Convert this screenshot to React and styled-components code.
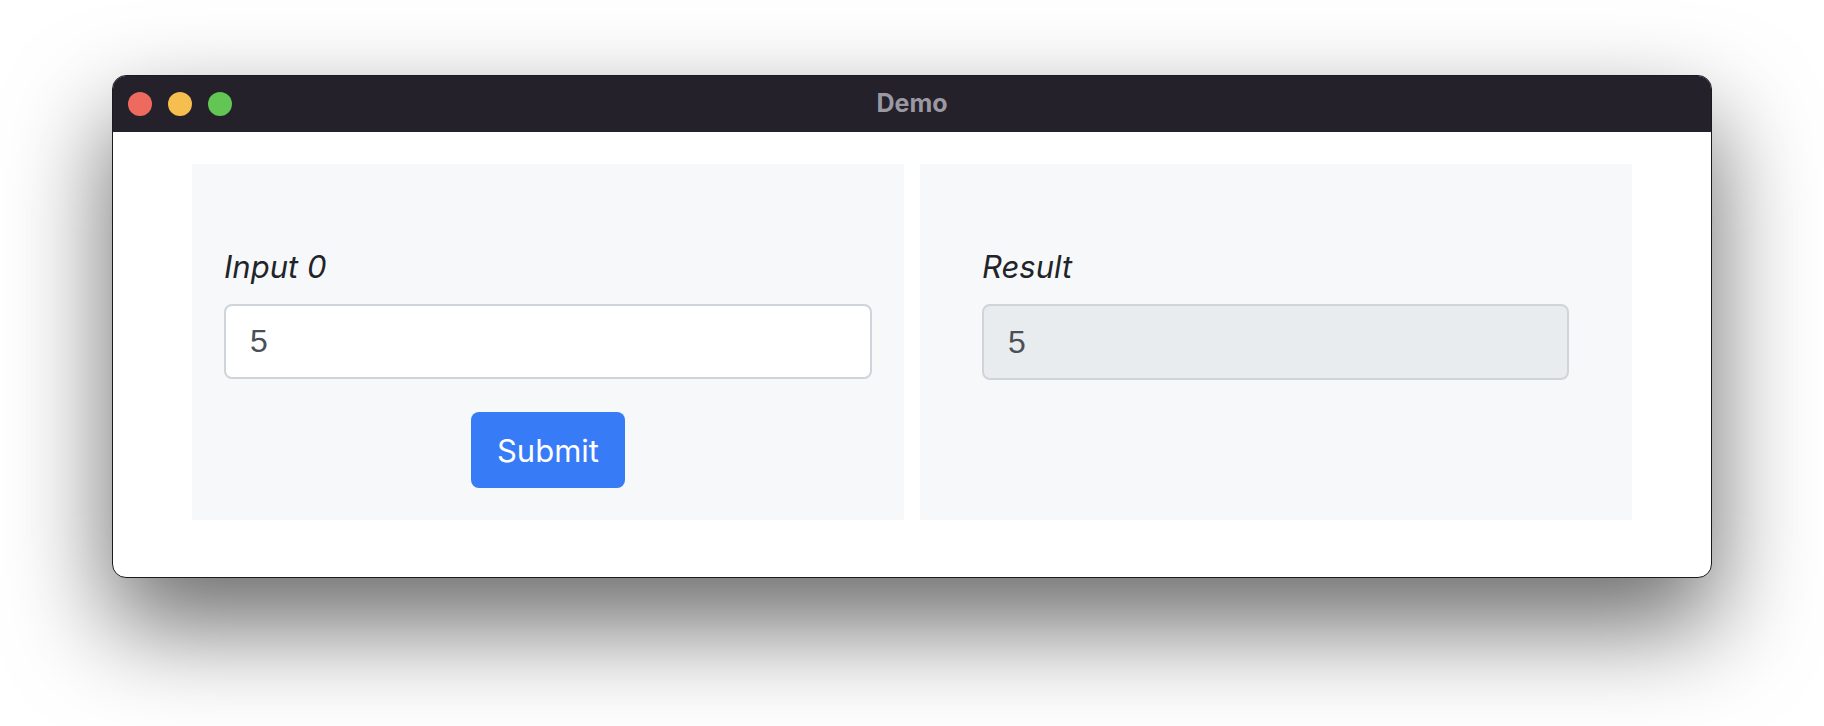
import styled, { createGlobalStyle } from "styled-components"

const GlobalStyle = createGlobalStyle`
  html, body {
    margin: 0;
    padding: 0;
    background: #ffffff;
  }
  body {
    font-family: Inter, "Liberation Sans", sans-serif;
  }
`;

const Page = styled.div`
  height: 726px;
  padding-top: 75px;
  box-sizing: border-box;
  display: flex;
  justify-content: center;
  overflow: hidden;
`;

const Window = styled.div`
  width: 1600px;
  height: 503px;
  box-sizing: border-box;
  border: 1px solid #1b1a1f;
  border-radius: 14px;
  background: #ffffff;
  overflow: hidden;
  box-shadow: 0 46px 100px 2px rgba(0, 0, 0, 0.58);
  display: flex;
  flex-direction: column;
`;

const TitleBar = styled.div`
  height: 56px;
  flex-shrink: 0;
  background: #24212b;
  display: flex;
  align-items: center;
  position: relative;
  padding-left: 15px;
  gap: 16px;
`;

const Light = styled.span`
  width: 24px;
  height: 24px;
  border-radius: 50%;
  background: ${(p) => p.color};
`;

const Title = styled.div`
  position: absolute;
  left: 0;
  right: 0;
  top: 0;
  bottom: 2px;
  display: flex;
  align-items: center;
  justify-content: center;
  font-family: Inter, "Liberation Sans", sans-serif;
  font-weight: 700;
  font-size: 25px;
  color: #9b98a4;
  pointer-events: none;
`;

const Content = styled.div`
  padding: 32px 79px 0 79px;
  display: grid;
  grid-template-columns: 1fr 1fr;
  gap: 16px;
`;

const Panel = styled.div`
  height: 356px;
  box-sizing: border-box;
  background: #f7f8fa;
  padding: ${(p) => (p.wide ? "79px 63px 32px 62px" : "79px 32px 32px 32px")};
  display: flex;
  flex-direction: column;
`;

const Label = styled.label`
  font-family: Inter, "Liberation Sans", sans-serif;
  font-style: italic;
  font-size: 31px;
  line-height: 48px;
  color: #212529;
  margin-bottom: 13px;
`;

const Field = styled.input`
  height: 76px;
  box-sizing: border-box;
  width: 100%;
  border: 2px solid #ced4da;
  border-radius: 8px;
  padding: 0 24px;
  font-family: "Liberation Sans", Arial, sans-serif;
  font-size: 32px;
  color: #495057;
  background: ${(p) => (p.disabled ? "#e9ecef" : "#ffffff")};
  outline: none;
`;

const ButtonRow = styled.div`
  display: flex;
  justify-content: center;
  margin-top: 33px;
`;

const SubmitButton = styled.button`
  height: 76px;
  width: 154px;
  border: none;
  border-radius: 8px;
  background: #387bf6;
  color: #ffffff;
  font-family: Inter, "Liberation Sans", sans-serif;
  font-size: 31px;
  cursor: pointer;
`;

const App = () => {
  return (
    <>
      <GlobalStyle />
      <Page>
        <Window>
          <TitleBar>
            <Light color="#ee6a5f" />
            <Light color="#f5be4f" />
            <Light color="#62c554" />
            <Title>Demo</Title>
          </TitleBar>
          <Content>
            <Panel>
              <Label>Input 0</Label>
              <Field defaultValue="5" />
              <ButtonRow>
                <SubmitButton>Submit</SubmitButton>
              </ButtonRow>
            </Panel>
            <Panel wide>
              <Label>Result</Label>
              <Field value="5" disabled readOnly />
            </Panel>
          </Content>
        </Window>
      </Page>
    </>
  )
}

export default App
